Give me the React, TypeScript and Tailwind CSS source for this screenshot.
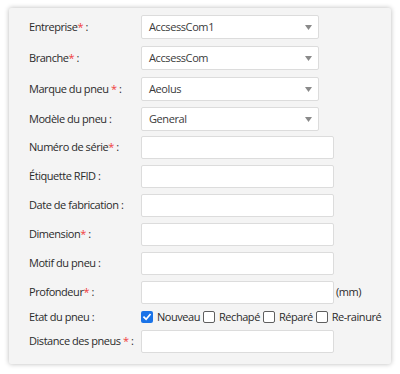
import React from "react";

const font = { fontFamily: '"Open Sans", "Noto Sans", sans-serif' };

function Label({ text, star, spaced }: { text: string; star?: boolean; spaced?: boolean }) {
  return (
    <div className="w-[112px] shrink-0 text-[11px] tracking-[-0.45px] text-[#2b2b2b] whitespace-nowrap">
      {text}
      {star && (
        <span className="text-[#f03c3c]">
          {spaced ? " " : ""}*
        </span>
      )}{" "}
      :
    </div>
  );
}

function Select({ value }: { value: string }) {
  return (
    <div className="w-[178px] h-[24px] bg-white border border-[#dcdcdc] rounded-[2px] flex items-center justify-between pl-[7px] pr-[6px]">
      <span className="text-[11px] tracking-[-0.4px] text-[#3a3a3a]">{value}</span>
      <svg width="7" height="5" viewBox="0 0 7 5">
        <path d="M0 0 L7 0 L3.5 5 Z" fill="#8a8a8a" />
      </svg>
    </div>
  );
}

function Input() {
  return <div className="w-[193px] h-[23px] bg-white border border-[#dcdcdc] rounded-[2px]" />;
}

function Check({ checked, label }: { checked?: boolean; label: string }) {
  return (
    <label className="flex items-center gap-[4px]">
      {checked ? (
        <span className="w-[12px] h-[12px] rounded-[2px] bg-[#1a73e8] flex items-center justify-center">
          <svg width="10" height="10" viewBox="0 0 10 10">
            <path d="M2 5.2 L4.1 7.3 L8 2.6" stroke="white" strokeWidth="1.7" fill="none" strokeLinecap="square" />
          </svg>
        </span>
      ) : (
        <span className="w-[12px] h-[12px] rounded-[2px] bg-white border border-[#5f5f5f]" />
      )}
      <span className="text-[11px] tracking-[-0.45px] text-[#2b2b2b]">{label}</span>
    </label>
  );
}

export default function App() {
  return (
    <div className="w-[400px] h-[374px] bg-white pt-[8px] pl-[9px]" style={font}>
      <div className="w-[382px] h-[356px] bg-[#f4f4f4] rounded-[2px] shadow-[0_0_5px_rgba(0,0,0,0.28)] pl-[20px] pt-[7px] flex flex-col">
        <div className="flex items-center h-[24px]">
          <Label text="Entreprise" star />
          <Select value="AccsessCom1" />
        </div>
        <div className="flex items-center h-[24px] mt-[7px]">
          <Label text="Branche" star />
          <Select value="AccsessCom" />
        </div>
        <div className="flex items-center h-[24px] mt-[7px]">
          <Label text="Marque du pneu" star spaced />
          <Select value="Aeolus" />
        </div>
        <div className="flex items-center h-[24px] mt-[6px]">
          <Label text="Modèle du pneu" />
          <Select value="General" />
        </div>
        <div className="flex items-center h-[23px] mt-[5px]">
          <Label text="Numéro de série" star />
          <Input />
        </div>
        <div className="flex items-center h-[23px] mt-[6px]">
          <Label text="Étiquette RFID" />
          <Input />
        </div>
        <div className="flex items-center h-[23px] mt-[6px]">
          <Label text="Date de fabrication" />
          <Input />
        </div>
        <div className="flex items-center h-[23px] mt-[6px]">
          <Label text="Dimension" star />
          <Input />
        </div>
        <div className="flex items-center h-[23px] mt-[6px]">
          <Label text="Motif du pneu" />
          <Input />
        </div>
        <div className="flex items-center h-[23px] mt-[6px]">
          <Label text="Profondeur" star />
          <Input />
          <span className="ml-[2px] text-[11px] tracking-[-0.45px] text-[#2b2b2b]">(mm)</span>
        </div>
        <div className="flex items-center h-[26px]">
          <Label text="Etat du pneu" />
          <div className="flex items-center gap-[3px]">
            <Check checked label="Nouveau" />
            <Check label="Rechapé" />
            <Check label="Réparé" />
            <Check label="Re-rainuré" />
          </div>
        </div>
        <div className="flex items-center h-[23px]">
          <Label text="Distance des pneus" star spaced />
          <Input />
        </div>
      </div>
    </div>
  );
}
